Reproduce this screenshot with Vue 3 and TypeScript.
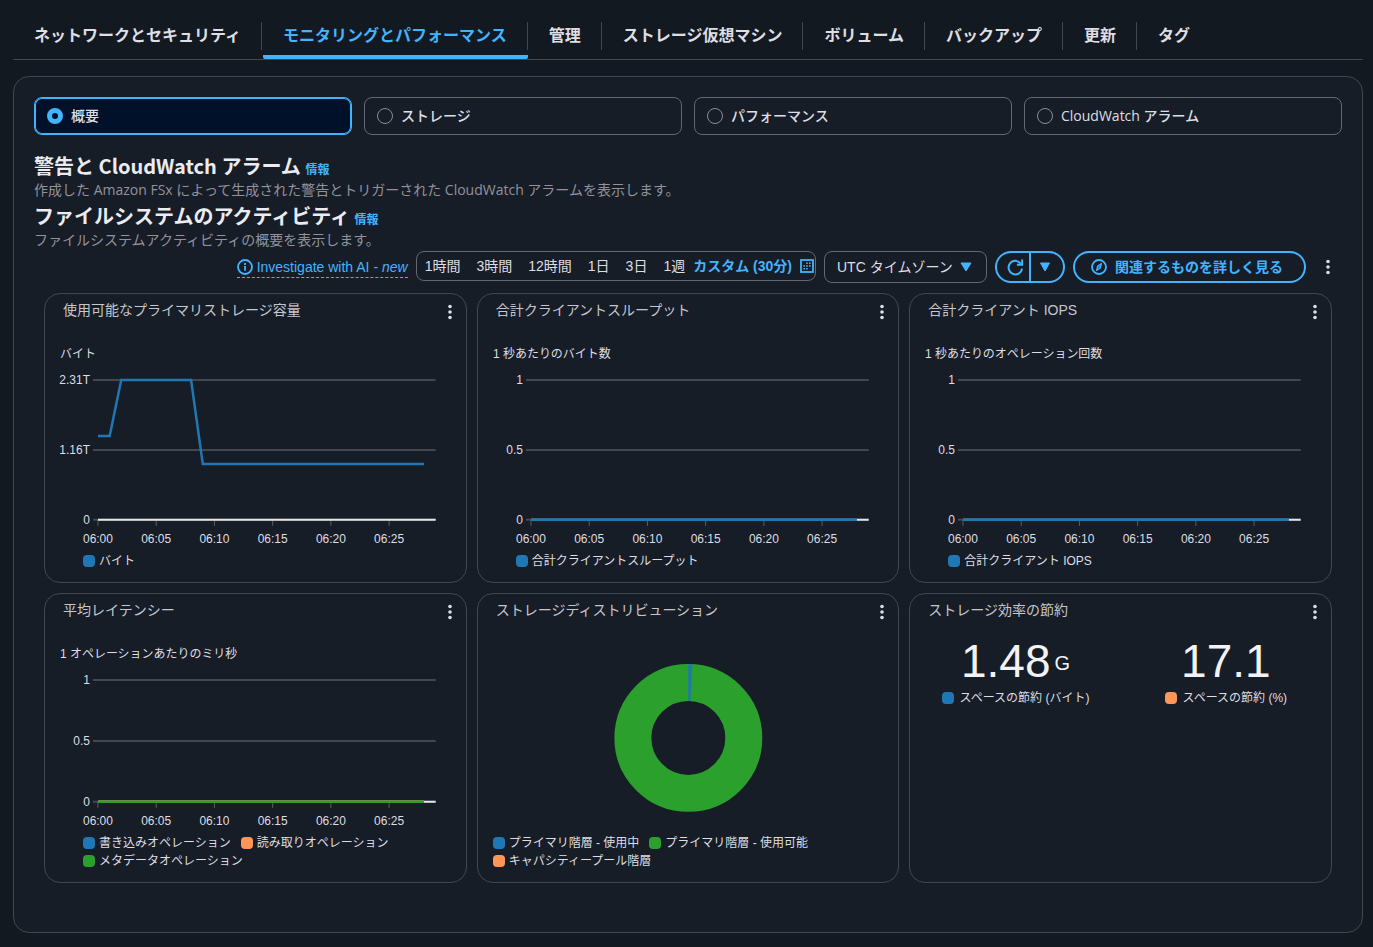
<script setup lang="ts">
import { ref } from 'vue'

interface Series {
  name: string
  color: string
  points: [number, number][]
}

interface LineWidget {
  kind: 'line'
  title: string
  unit: string
  ticks: string[]
  bottom: number
  series: Series[]
}

interface PieWidget {
  kind: 'pie'
  title: string
  series: Series[]
}

interface NumberWidget {
  kind: 'number'
  title: string
  stats: { value: string; suffix: string; label: string; color: string }[]
}

type Widget = LineWidget | PieWidget | NumberWidget

const BLUE = '#1f77b4'
const ORANGE = '#ff9657'
const GREEN = '#2ca02c'

const tabs: string[] = [
  'ネットワークとセキュリティ',
  'モニタリングとパフォーマンス',
  '管理',
  'ストレージ仮想マシン',
  'ボリューム',
  'バックアップ',
  '更新',
  'タグ',
]
const activeTab = ref(1)

const views: string[] = ['概要', 'ストレージ', 'パフォーマンス', 'CloudWatch アラーム']
const activeView = ref('概要')

const ranges: string[] = ['1時間', '3時間', '12時間', '1日', '3日', '1週']
const timezone = ref('UTC')

const times: string[] = ['06:00', '06:05', '06:10', '06:15', '06:20', '06:25']

const flat: [number, number][] = [[0, 0], [28, 0]]

const widgets: Widget[] = [
  {
    kind: 'line',
    title: '使用可能なプライマリストレージ容量',
    unit: 'バイト',
    ticks: ['2.31T', '1.16T', '0'],
    bottom: 190,
    series: [
      {
        name: 'バイト',
        color: BLUE,
        points: [[0, 0.6], [1, 0.6], [2, 1], [8, 1], [9, 0.4], [28, 0.4]],
      },
    ],
  },
  {
    kind: 'line',
    title: '合計クライアントスループット',
    unit: '1 秒あたりのバイト数',
    ticks: ['1', '0.5', '0'],
    bottom: 190,
    series: [{ name: '合計クライアントスループット', color: BLUE, points: flat }],
  },
  {
    kind: 'line',
    title: '合計クライアント IOPS',
    unit: '1 秒あたりのオペレーション回数',
    ticks: ['1', '0.5', '0'],
    bottom: 190,
    series: [{ name: '合計クライアント IOPS', color: BLUE, points: flat }],
  },
  {
    kind: 'line',
    title: '平均レイテンシー',
    unit: '1 オペレーションあたりのミリ秒',
    ticks: ['1', '0.5', '0'],
    bottom: 172,
    series: [
      { name: '書き込みオペレーション', color: BLUE, points: flat },
      { name: '読み取りオペレーション', color: ORANGE, points: flat },
      { name: 'メタデータオペレーション', color: GREEN, points: flat },
    ],
  },
  {
    kind: 'pie',
    title: 'ストレージディストリビューション',
    series: [
      { name: 'プライマリ階層 - 使用中', color: BLUE, points: [] },
      { name: 'プライマリ階層 - 使用可能', color: GREEN, points: [] },
      { name: 'キャパシティープール階層', color: ORANGE, points: [] },
    ],
  },
  {
    kind: 'number',
    title: 'ストレージ効率の節約',
    stats: [
      { value: '1.48', suffix: 'G', label: 'スペースの節約 (バイト)', color: BLUE },
      { value: '17.1', suffix: '', label: 'スペースの節約 (%)', color: ORANGE },
    ],
  },
]

const TOP = 50
const LEFT = 53
const RIGHT = 391
const MINUTES = 29

const xAt = (minute: number): number => LEFT + (minute * (RIGHT - LEFT)) / MINUTES
const yAt = (value: number, bottom: number): number => bottom - value * (bottom - TOP)
const linePoints = (s: Series, bottom: number): string =>
  s.points.map(([m, v]) => `${xAt(m).toFixed(1)},${yAt(v, bottom).toFixed(1)}`).join(' ')
</script>

<template>
  <main class="page">
    <nav class="tabs" role="tablist">
      <button
        v-for="(tab, i) in tabs"
        :key="tab"
        type="button"
        role="tab"
        class="tab"
        :class="{ active: i === activeTab }"
        :aria-selected="i === activeTab"
        @click="activeTab = i"
      >
        <span class="tab-label">{{ tab }}</span>
      </button>
    </nav>

    <section class="panel">
      <div class="tiles" role="radiogroup">
        <label v-for="view in views" :key="view" class="tile" :class="{ checked: view === activeView }">
          <input v-model="activeView" type="radio" name="view" :value="view" />
          <span>{{ view }}</span>
        </label>
      </div>

      <header class="heading">
        <h2>警告と CloudWatch アラーム <a href="#alarms">情報</a></h2>
        <p>作成した Amazon FSx によって生成された警告とトリガーされた CloudWatch アラームを表示します。</p>
      </header>
      <header class="heading">
        <h2>ファイルシステムのアクティビティ <a href="#activity">情報</a></h2>
        <p>ファイルシステムアクティビティの概要を表示します。</p>
      </header>

      <div class="toolbar">
        <a class="investigate" href="#investigate">
          <svg width="16" height="16" viewBox="0 0 16 16" fill="none" stroke="currentColor" stroke-width="1.8">
            <circle cx="8" cy="8" r="7" />
            <path d="M8 7v4.8M8 4v2" />
          </svg>
          <span>Investigate with AI - <em>new</em></span>
        </a>

        <div class="ranges">
          <button v-for="range in ranges" :key="range" type="button">{{ range }}</button>
          <button type="button" class="custom">
            <span>カスタム (30分)</span>
            <svg width="14" height="14" viewBox="0 0 14 14" fill="none" stroke="currentColor">
              <rect x="1" y="1" width="12" height="12" stroke-width="1.800" />
              <path d="M6.200 4.200h1.600M9 4.200h1.600M3.400 7h1.600M6.200 7h1.600M9 7h1.600M3.400 9.800h1.600M6.200 9.800h1.600" stroke-width="1.600" />
            </svg>
          </button>
        </div>

        <div class="timezone">
          <select v-model="timezone" aria-label="タイムゾーン">
            <option value="UTC">UTC タイムゾーン</option>
          </select>
          <svg class="caret" width="12" height="10" viewBox="0 0 12 10"><path d="M1 1h10L6 9z" fill="currentColor" stroke="currentColor" stroke-linejoin="round" /></svg>
        </div>

        <div class="refresh">
          <button type="button" aria-label="更新する">
            <svg width="17" height="17" viewBox="0 0 18 18" fill="none" stroke="currentColor" stroke-width="2.1">
              <path d="M16 10.2A7.200 7.200 0 1 1 14.600 4.800" />
              <path d="M16 0.500v5.500h-5.500" />
            </svg>
          </button>
          <button type="button" aria-label="更新間隔">
            <svg width="12" height="10" viewBox="0 0 12 10"><path d="M1.500 1h9L6 9z" fill="currentColor" stroke="currentColor" stroke-linejoin="round" /></svg>
          </button>
        </div>

        <button type="button" class="explore">
          <svg width="16" height="16" viewBox="0 0 16 16" fill="none" stroke="currentColor">
            <circle cx="8" cy="8" r="7" stroke-width="1.800" />
            <path d="M10.400 4.600 9.300 9 5.600 11.400 6.700 7z" stroke-width="1.300" stroke-linejoin="round" />
            <circle cx="8" cy="8" r="0.900" fill="currentColor" stroke="none" />
          </svg>
          <span>関連するものを詳しく見る</span>
        </button>

        <button type="button" class="dots" aria-label="アクション">
          <svg width="4" height="16" viewBox="0 0 4 16" fill="currentColor">
            <circle cx="2" cy="2.500" r="1.800" /><circle cx="2" cy="8" r="1.800" /><circle cx="2" cy="13.500" r="1.800" />
          </svg>
        </button>
      </div>

      <div class="grid">
        <article v-for="w in widgets" :key="w.title" class="card">
          <div class="card-head">
            <h3>{{ w.title }}</h3>
            <button type="button" class="dots" aria-label="ウィジェットのアクション">
              <svg width="4" height="16" viewBox="0 0 4 16" fill="currentColor">
                <circle cx="2" cy="2.500" r="1.800" /><circle cx="2" cy="8" r="1.800" /><circle cx="2" cy="13.500" r="1.800" />
              </svg>
            </button>
          </div>

          <template v-if="w.kind === 'line'">
            <svg class="chart" :viewBox="`0 0 421 ${w.bottom + 32}`">
              <text x="15" y="28">{{ w.unit }}</text>
              <g v-for="(tick, i) in w.ticks" :key="tick">
                <line class="rule" x1="48" :x2="RIGHT" :y1="yAt(1 - i / 2, w.bottom)" :y2="yAt(1 - i / 2, w.bottom)" />
                <text x="45" :y="yAt(1 - i / 2, w.bottom) + 4" text-anchor="end">{{ tick }}</text>
              </g>
              <g v-for="(time, i) in times" :key="time">
                <line class="tick" :x1="xAt(i * 5)" :x2="xAt(i * 5)" :y1="w.bottom" :y2="w.bottom + 6" />
                <text :x="xAt(i * 5)" :y="w.bottom + 23" text-anchor="middle">{{ time }}</text>
              </g>
              <line class="axis" :x1="LEFT" :x2="RIGHT" :y1="w.bottom" :y2="w.bottom" />
              <polyline
                v-for="s in w.series"
                :key="s.name"
                class="series"
                :points="linePoints(s, w.bottom)"
                :stroke="s.color"
              />
            </svg>
            <ul class="legend indented">
              <li v-for="s in w.series" :key="s.name">
                <i class="swatch" :style="{ background: s.color }"></i>{{ s.name }}
              </li>
            </ul>
          </template>

          <template v-else-if="w.kind === 'pie'">
            <svg class="chart" viewBox="0 0 421 204">
              <circle cx="210.500" cy="108" r="55.500" fill="none" stroke="#2ca02c" stroke-width="37" />
              <path d="M210.500 34a74 74 0 0 1 4 0.100l-2 37a37 37 0 0 0-2-0.100z" fill="#1f77b4" />
            </svg>
            <ul class="legend">
              <li v-for="s in w.series" :key="s.name">
                <i class="swatch" :style="{ background: s.color }"></i>{{ s.name }}
              </li>
            </ul>
          </template>

          <div v-else class="stats">
            <div v-for="s in w.stats" :key="s.label" class="stat">
              <div class="value">{{ s.value }}<small v-if="s.suffix">{{ s.suffix }}</small></div>
              <div class="stat-label"><i class="swatch" :style="{ background: s.color }"></i>{{ s.label }}</div>
            </div>
          </div>
        </article>
      </div>
    </section>
  </main>
</template>

<style>
html,
body {
  margin: 0;
  background: #131920;
}
</style>

<style scoped>
.page {
  box-sizing: border-box;
  min-height: 100vh;
  padding: 13px 10px 14px 13px;
  background: #131920;
  color: #dedee3;
  font-family: 'Open Sans', 'Noto Sans CJK JP', sans-serif;
  font-size: 14px;
  line-height: 20px;
}

button,
select,
input {
  margin: 0;
  padding: 0;
  border: 0;
  background: none;
  color: inherit;
  font: inherit;
  cursor: pointer;
}

a {
  color: #42b4ff;
  text-decoration: none;
}

svg {
  display: block;
  flex: none;
}

.tabs {
  display: flex;
  height: 46px;
  border-bottom: 1px solid #424650;
}

.tab {
  display: flex;
  align-items: flex-start;
  padding-top: 9px;
  margin-left: 1px;
  border-bottom: 4px solid transparent;
  border-radius: 2px;
  font-size: 16px;
  font-weight: 700;
  line-height: 26px;
  white-space: nowrap;
}

.tab-label {
  height: 28px;
  padding: 0 20px;
  border-right: 1px solid #424650;
}

.tab:last-child .tab-label {
  border-right: 0;
}

.tab.active {
  border-bottom-color: #42b4ff;
  color: #42b4ff;
}

.panel {
  margin-top: 16px;
  padding: 20px 20px 49px;
  border: 1px solid #424650;
  border-radius: 16px;
  background: #171d27;
}

.tiles {
  display: grid;
  grid-template-columns: repeat(4, 1fr);
  gap: 12px;
  margin-bottom: 16px;
}

.tile {
  display: flex;
  align-items: center;
  gap: 8px;
  height: 36px;
  padding: 0 12px;
  border: 1px solid #656871;
  border-radius: 8px;
  font-weight: 500;
  cursor: pointer;
}

.tile.checked {
  border-color: #42b4ff;
  background: #001129;
  box-shadow: inset 0 0 0 1px #42b4ff;
}

.tile input {
  width: 16px;
  height: 16px;
  border: 1px solid #8c8c94;
  border-radius: 50%;
  appearance: none;
}

.tile input:checked {
  border: 5px solid #42b4ff;
}

h2,
h3,
p {
  margin: 0;
}

.heading {
  display: grid;
  grid-template-rows: 30px 20px;
}

.heading h2 {
  color: #ebebf0;
  font-family: 'Noto Sans CJK JP', sans-serif;
  font-size: 20px;
  font-weight: 700;
  line-height: 30px;
}

.heading h2 a {
  font-size: 12px;
}

.heading p {
  color: #92929c;
  line-height: 18px;
}

.toolbar {
  display: flex;
  flex-wrap: wrap;
  justify-content: flex-end;
  gap: 8px;
  font-family: 'Liberation Sans', 'Noto Sans CJK JP', sans-serif;
}

.investigate {
  display: flex;
  align-items: center;
  gap: 4px;
  height: 20px;
  margin-top: 6px;
  border-bottom: 1px dashed #42b4ff;
}

.ranges {
  display: flex;
  box-sizing: border-box;
  height: 30px;
  padding-right: 1px;
  border: 1px solid #656871;
  border-radius: 8px;
  overflow: hidden;
}

.ranges button {
  padding: 0 8px;
  line-height: 28px;
}

.ranges .custom {
  display: flex;
  align-items: center;
  gap: 8px;
  padding: 0;
  color: #42b4ff;
  font-weight: 700;
}

.timezone {
  position: relative;
  color: #dedee3;
}

.timezone select {
  box-sizing: border-box;
  width: 163px;
  height: 32px;
  padding: 0 12px;
  border: 1px solid #656871;
  border-radius: 8px;
  appearance: none;
}

.timezone option {
  background: #171d27;
}

.timezone .caret {
  position: absolute;
  top: 11px;
  right: 15px;
  color: #42b4ff;
  pointer-events: none;
}

.refresh {
  display: flex;
  box-sizing: border-box;
  width: 70px;
  height: 32px;
  border: 2px solid #42b4ff;
  border-radius: 16px;
  color: #42b4ff;
}

.refresh button {
  display: flex;
  flex: 1;
  align-items: center;
  justify-content: center;
}

.refresh button + button {
  padding-right: 4px;
  border-left: 2px solid #42b4ff;
}

.refresh button:first-child {
  padding-left: 4px;
}

.explore {
  display: flex;
  align-items: center;
  gap: 8px;
  height: 32px;
  padding: 0 21px 0 16px;
  border: 2px solid #42b4ff;
  border-radius: 16px;
  color: #42b4ff;
  font-weight: 700;
}

.dots {
  display: flex;
  align-items: center;
  justify-content: center;
  width: 28px;
  height: 32px;
}

.grid {
  display: grid;
  grid-template-columns: repeat(3, 1fr);
  gap: 10px;
  margin: 10px 10px 0;
  font-family: 'Liberation Sans', 'Noto Sans CJK JP', sans-serif;
}

.card {
  display: flex;
  flex-direction: column;
  min-height: 288px;
  border: 1px solid #424650;
  border-radius: 16px;
}

.card-head {
  display: flex;
  justify-content: space-between;
  height: 36px;
  padding: 0 2px 0 18px;
}

.card-head h3 {
  color: #c6c6cd;
  font-size: 14px;
  font-weight: 400;
  line-height: 32px;
}

.card-head .dots {
  height: 36px;
}

.chart {
  width: 100%;
  height: auto;
}

.chart text {
  fill: #dedee3;
  font-size: 12px;
}

.rule {
  stroke: #44474d;
  stroke-width: 2;
}

.tick {
  stroke: #5a5d63;
  stroke-width: 1;
}

.axis {
  stroke: #e6e6ea;
  stroke-width: 2;
}

.series {
  fill: none;
  stroke-width: 2.5;
}

.legend {
  display: flex;
  flex-wrap: wrap;
  column-gap: 10px;
  margin: 0;
  padding: 0 15px 12px;
  list-style: none;
  font-size: 12px;
  line-height: 18px;
}

.legend.indented {
  padding-left: 38px;
}

.legend li {
  display: flex;
  align-items: center;
  gap: 4px;
}

.swatch {
  flex: none;
  width: 12px;
  height: 12px;
  border-radius: 4px;
}

.stats {
  display: grid;
  grid-template-columns: 1fr 1fr;
}

.stat {
  display: flex;
  flex-direction: column;
  align-items: center;
}

.value {
  display: flex;
  align-items: flex-start;
  gap: 4px;
  height: 59px;
  color: #f3f3f5;
  font-size: 46px;
  line-height: 62px;
}

.value small {
  font-size: 20px;
  line-height: 66px;
}

.stat-label {
  display: flex;
  align-items: center;
  gap: 6px;
  font-size: 12px;
  line-height: 18px;
}
</style>
